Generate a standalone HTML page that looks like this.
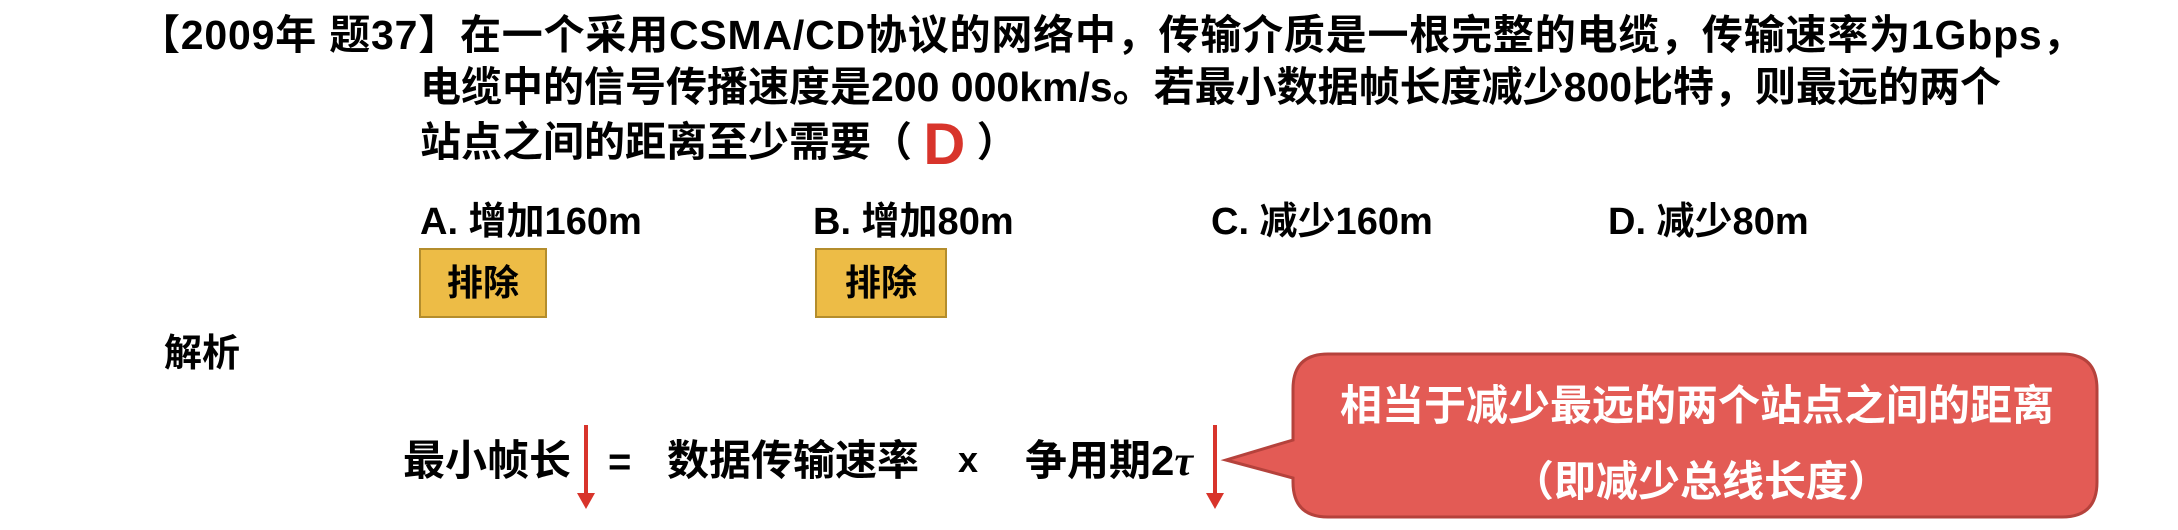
<!DOCTYPE html>
<html><head><meta charset="utf-8"><style>
html,body{margin:0;padding:0;background:#fff;}
body{width:2178px;height:530px;position:relative;overflow:hidden;font-family:"Liberation Sans","Noto Sans CJK SC",sans-serif;font-weight:bold;color:#000;}
.t{position:absolute;white-space:nowrap;font-size:38px;line-height:1;}
.q{font-size:41px;letter-spacing:0px;}
.box{position:absolute;background:#EDBC46;border:2px solid #B48D2C;box-sizing:border-box;font-size:36px;text-align:center;line-height:66px;}
.arrow{position:absolute;width:4px;background:#D8342B;}
.arrow:after{content:"";position:absolute;left:-7px;bottom:-14px;border-left:9px solid transparent;border-right:9px solid transparent;border-top:16px solid #D8342B;}
</style></head><body>
<div class="t q" style="left:139px;top:15px;letter-spacing:0.8px;">【2009年 题37】在一个采用CSMA/CD协议的网络中，传输介质是一根完整的电缆，传输速率为1Gbps，</div>
<div class="t q" style="left:420px;top:67px;">电缆中的信号传播速度是200 000km/s。若最小数据帧长度减少800比特，则最远的两个</div>
<div class="t q" style="left:420px;top:116px;">站点之间的距离至少需要（ <span style="color:#D8342B;font-size:58px;vertical-align:-8px;">D</span> ）</div>

<div class="t" style="left:420px;top:203px;">A. 增加160m</div>
<div class="t" style="left:813px;top:203px;">B. 增加80m</div>
<div class="t" style="left:1211px;top:203px;">C. 减少160m</div>
<div class="t" style="left:1608px;top:203px;">D. 减少80m</div>

<div class="box" style="left:419px;top:248px;width:128px;height:70px;">排除</div>
<div class="box" style="left:815px;top:248px;width:132px;height:70px;">排除</div>

<div class="t" style="left:164px;top:335px;">解析</div>

<div class="t" style="left:403px;top:440px;font-size:42px;">最小帧长</div>
<div class="arrow" style="left:584px;top:425px;height:70px;"></div>
<div class="t" style="left:608px;top:442px;font-size:40px;">=</div>
<div class="t" style="left:667px;top:440px;font-size:42px;">数据传输速率</div>
<div class="t" style="left:958px;top:442px;font-size:36px;">x</div>
<div class="t" style="left:1025px;top:440px;font-size:42px;">争用期2<i style="font-family:'Liberation Serif',serif;">τ</i></div>
<div class="arrow" style="left:1213px;top:425px;height:70px;"></div>

<svg style="position:absolute;left:0;top:0;" width="2178" height="530">
<path d="M1328,354 H2062 Q2097,354 2097,389 V482 Q2097,517 2062,517 H1328 Q1293,517 1293,482 V478 L1226,460 L1293,440 V389 Q1293,354 1328,354 Z" fill="#E35B55" stroke="#B5423C" stroke-width="3"/>
</svg>
<div class="t" style="left:1340px;top:385px;color:#fff;font-size:42px;">相当于减少最远的两个站点之间的距离</div>
<div class="t" style="left:1512px;top:461px;color:#fff;font-size:42px;">（即减少总线长度）</div>
</body></html>
